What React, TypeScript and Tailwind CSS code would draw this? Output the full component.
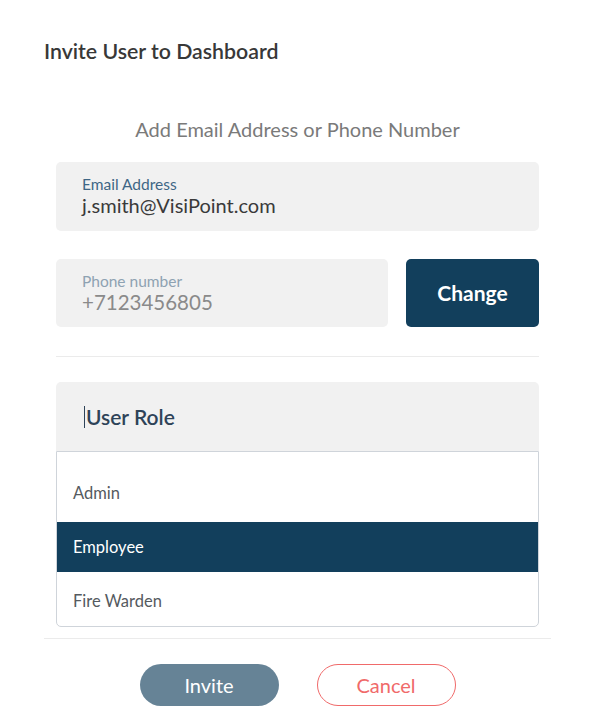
import React, { useState } from "react";

const roles = ["Admin", "Employee", "Fire Warden"];

export default function App() {
  const [role, setRole] = useState("Employee");

  return (
    <div
      className="w-[595px] h-[725px] bg-white overflow-hidden"
      style={{ fontFamily: "Lato, 'Noto Sans', sans-serif" }}
    >
      <div className="px-[44px] pt-[39px]">
        <h1 className="text-[21.3px] leading-[25px] font-semibold text-[#383838]">Invite User to Dashboard</h1>

        <div className="px-[12px]">
          <p className="mt-[53px] text-center text-[20px] leading-[24px] text-[#7a7a7a]">
            Add Email Address or Phone Number
          </p>

          <div className="mt-[21px] h-[69px] rounded-[5px] bg-[#f1f1f1] pl-[26px] pt-[13px]">
            <div className="text-[15.5px] leading-[18px] text-[#3e6685]">Email Address</div>
            <div className="text-[20px] leading-[24px] text-[#3a3a3a]">j.smith@VisiPoint.com</div>
          </div>

          <div className="mt-[28px] flex gap-[18px]">
            <div className="flex-1 h-[68px] rounded-[5px] bg-[#f1f1f1] pl-[26px] pt-[13px]">
              <div className="text-[15.5px] leading-[18px] text-[#8ea2b2]">Phone number</div>
              <div className="text-[20.5px] leading-[24px] text-[#8a8a8a]">+7123456805</div>
            </div>
            <button className="w-[133px] h-[68px] rounded-[5px] bg-[#123f5c] text-white text-[21px] font-bold">
              Change
            </button>
          </div>

          <div className="mt-[29px] h-px bg-[#ebebeb]" />

          <div className="mt-[25px] h-[69px] rounded-t-[5px] bg-[#f1f1f1] pl-[28px] flex items-center">
            <span className="w-px h-[22px] bg-[#2e4358]" />
            <span className="ml-[1px] text-[21px] font-semibold text-[#2e4358]">User Role</span>
          </div>

          <ul className="border border-[#cfd4da] rounded-b-[5px] overflow-hidden">
            {roles.map((r, i) => {
              const active = r === role;
              const h = i === 0 ? "h-[70px] pt-[13px]" : i === 1 ? "h-[50px]" : "h-[54px] pt-[5px]";
              return (
                <li
                  key={r}
                  onClick={() => setRole(r)}
                  className={`${h} flex items-center pl-[16px] text-[16.5px] cursor-pointer ${
                    active ? "bg-[#123f5c] text-white" : "text-[#555a60]"
                  }`}
                >
                  {r}
                </li>
              );
            })}
          </ul>
        </div>

        <div className="mt-[11px] h-px bg-[#ebebeb]" />

        <div className="mt-[25px] flex justify-center gap-[38px]">
          <button className="w-[139px] h-[42px] rounded-full bg-[#668396] text-white text-[20px]">Invite</button>
          <button className="w-[139px] h-[42px] rounded-full border border-[#f06a6a] text-[#f06a6a] text-[20px]">
            Cancel
          </button>
        </div>
      </div>
    </div>
  );
}
